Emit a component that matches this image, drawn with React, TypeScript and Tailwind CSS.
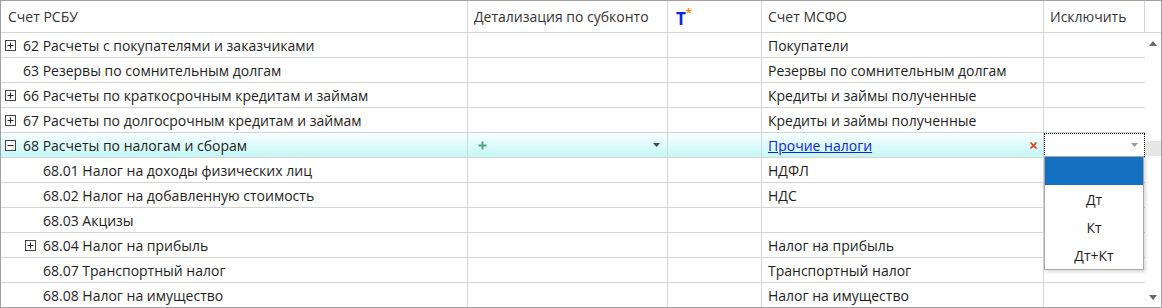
import React from 'react';

type Row = {
  code: string;
  level: 0 | 1;
  expander?: 'plus' | 'minus';
  ifrs?: string;
  active?: boolean;
};

const rows: Row[] = [
  { code: '62 Расчеты с покупателями и заказчиками', level: 0, expander: 'plus', ifrs: 'Покупатели' },
  { code: '63 Резервы по сомнительным долгам', level: 0, ifrs: 'Резервы по сомнительным долгам' },
  { code: '66 Расчеты по краткосрочным кредитам и займам', level: 0, expander: 'plus', ifrs: 'Кредиты и займы полученные' },
  { code: '67 Расчеты по долгосрочным кредитам и займам', level: 0, expander: 'plus', ifrs: 'Кредиты и займы полученные' },
  { code: '68 Расчеты по налогам и сборам', level: 0, expander: 'minus', ifrs: 'Прочие налоги', active: true },
  { code: '68.01 Налог на доходы физических лиц', level: 1, ifrs: 'НДФЛ' },
  { code: '68.02 Налог на добавленную стоимость', level: 1, ifrs: 'НДС' },
  { code: '68.03 Акцизы', level: 1 },
  { code: '68.04 Налог на прибыль', level: 1, expander: 'plus', ifrs: 'Налог на прибыль' },
  { code: '68.07 Транспортный налог', level: 1, ifrs: 'Транспортный налог' },
  { code: '68.08 Налог на имущество', level: 1, ifrs: 'Налог на имущество' },
];

const font = { fontFamily: '"Segoe UI", "Open Sans", sans-serif' };

function Expander({ kind }: { kind: 'plus' | 'minus' }) {
  return (
    <svg width="11" height="11" viewBox="0 0 11 11" className="shrink-0">
      <rect x="0.5" y="0.5" width="10" height="10" fill="white" stroke="#444" />
      <path d="M2.5 5.5h6" stroke="#222" />
      {kind === 'plus' && <path d="M5.5 2.5v6" stroke="#222" />}
    </svg>
  );
}

function Caret({ color = '#555' }: { color?: string }) {
  return (
    <svg width="7" height="4" viewBox="0 0 7 4">
      <path d="M0 0h7L3.5 4z" fill={color} />
    </svg>
  );
}

export default function App() {
  return (
    <div
      className="w-[1162px] h-[308px] overflow-hidden border border-[#a0a0a0] bg-white text-[14px] text-[#1e1e1e] relative"
      style={font}
    >
      {/* шапка */}
      <div className="flex h-[32px] border-b border-[#d4d4d4] text-[#333]">
        <div className="w-[467px] border-r border-[#d4d4d4] pl-[7px] flex items-center">Счет РСБУ</div>
        <div className="w-[200px] border-r border-[#d4d4d4] pl-[6px] flex items-center">Детализация по субконто</div>
        <div className="w-[94px] border-r border-[#d4d4d4] pl-[8px] flex items-center">
          <span className="relative font-bold text-[17px] text-[#0a24e6] leading-none mt-[3px]">
            T
            <span className="absolute -top-[4px] -right-[6px] text-[#ff8a00] text-[11px] font-bold">*</span>
          </span>
        </div>
        <div className="w-[282px] border-r border-[#d4d4d4] pl-[6px] flex items-center">Счет МСФО</div>
        <div className="w-[101px] border-r border-[#d4d4d4] pl-[6px] flex items-center">Исключить</div>
        <div className="flex-1" />
      </div>

      <div className="flex">
        {/* строки */}
        <div className="w-[1144px]">
          {rows.map((r, i) => (
            <div
              key={i}
              className={
                'flex h-[25px] border-b border-[#d4d4d4] ' +
                (r.active ? 'bg-gradient-to-b from-[#f7ffff] to-[#c4f7f7]' : '')
              }
            >
              <div className={'w-[467px] border-r border-[#d4d4d4] flex items-center gap-[7px] ' + (r.level === 0 ? 'pl-[4px]' : 'pl-[24px]')}>
                {r.expander ? <Expander kind={r.expander} /> : <span className="w-[11px] shrink-0" />}
                <span className="whitespace-nowrap">{r.code}</span>
              </div>
              <div className="w-[200px] border-r border-[#d4d4d4] flex items-center justify-between pl-[10px] pr-[7px]">
                {r.active && (
                  <>
                    <svg width="9" height="9" viewBox="0 0 9 9">
                      <path d="M4.5 0.5v8M0.5 4.5h8" stroke="#5a9e80" strokeWidth="2" />
                    </svg>
                    <Caret color="#444" />
                  </>
                )}
              </div>
              <div className="w-[94px] border-r border-[#d4d4d4]" />
              <div className="w-[282px] border-r border-[#d4d4d4] flex items-center justify-between pl-[6px] pr-[6px]">
                {r.active ? (
                  <>
                    <span className="text-[#0b24e0] underline whitespace-nowrap">{r.ifrs}</span>
                    <svg width="7" height="7" viewBox="0 0 7 7">
                      <path d="M0.5 0.5l6 6M6.5 0.5l-6 6" stroke="#e0461e" strokeWidth="1.6" />
                    </svg>
                  </>
                ) : (
                  <span className="whitespace-nowrap">{r.ifrs}</span>
                )}
              </div>
              <div className="flex-1 bg-white">
                {r.active && (
                  <div className="h-[24px] border border-dotted border-black flex items-center justify-end pr-[6px]">
                    <Caret color="#999" />
                  </div>
                )}
              </div>
            </div>
          ))}
        </div>

        {/* полоса прокрутки */}
        <div className="flex-1 h-[275px] flex flex-col items-center justify-between pt-[8px] pb-[8px] relative">
          <svg width="8" height="5" viewBox="0 0 8 5">
            <path d="M4 0L8 5H0z" fill="#666" />
          </svg>
          <div className="absolute left-0 right-0 top-[108px] h-[15px] bg-[#e6e6e6]" />
          <svg width="8" height="5" viewBox="0 0 8 5">
            <path d="M0 0h8L4 5z" fill="#666" />
          </svg>
        </div>
      </div>

      {/* выпадающий список */}
      <div className="absolute left-[1043px] top-[155px] w-[100px] border border-[#a8a8a8] bg-white shadow-[2px_2px_3px_rgba(0,0,0,0.15)]">
        <div className="h-[28px] bg-[#1470c0]" />
        <div className="h-[28px] flex items-center justify-center">Дт</div>
        <div className="h-[28px] flex items-center justify-center">Кт</div>
        <div className="h-[28px] flex items-center justify-center">Дт+Кт</div>
      </div>
    </div>
  );
}
